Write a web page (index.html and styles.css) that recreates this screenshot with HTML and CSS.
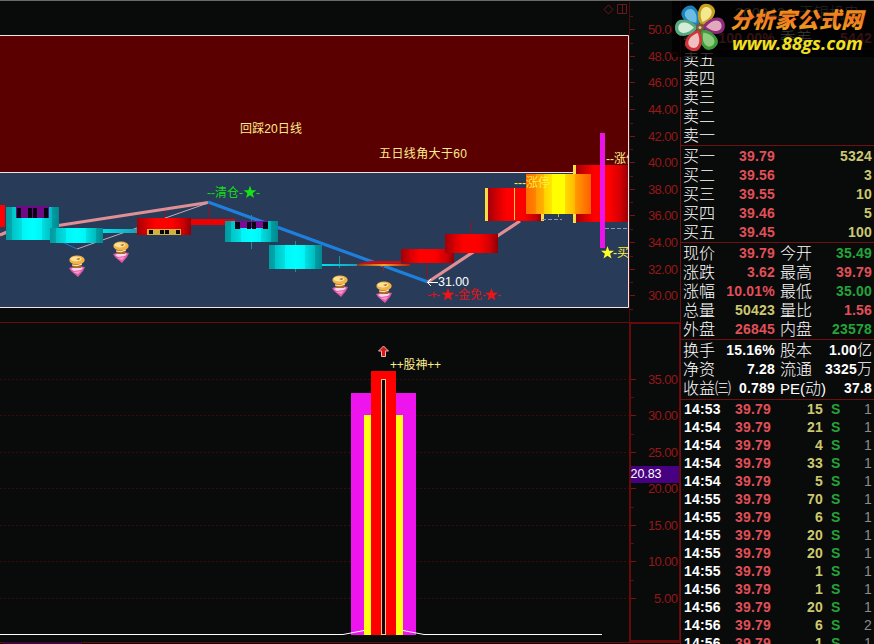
FILE: index.html
```html
<!DOCTYPE html>
<html lang="zh-CN">
<head>
  <meta charset="UTF-8">
  <title>分析家公式网</title>
  <link rel="stylesheet" href="styles.css">
</head>
<body>
<div class="screen">

  <div class="charts">
    <!-- K line -->
    <svg class="chart" width="680" height="322" viewBox="0 0 680 322">
      <defs>
        <linearGradient id="cyan">
          <stop offset="0" stop-color="#009aa0"/><stop offset=".12" stop-color="#00a8ac"/>
          <stop offset=".12" stop-color="#00c4c8"/><stop offset=".3" stop-color="#00dfe2"/>
          <stop offset=".3" stop-color="#00f4f6"/><stop offset=".5" stop-color="#00ffff"/>
          <stop offset=".68" stop-color="#00f4f6"/><stop offset=".68" stop-color="#00dfe2"/>
          <stop offset=".86" stop-color="#00bcc0"/><stop offset=".86" stop-color="#00a0a5"/>
          <stop offset="1" stop-color="#00888f"/>
        </linearGradient>
        <linearGradient id="red">
          <stop offset="0" stop-color="#a00008"/><stop offset=".2" stop-color="#dd0000"/>
          <stop offset=".35" stop-color="#ff0000"/><stop offset=".65" stop-color="#fc0000"/>
          <stop offset=".85" stop-color="#d00004"/><stop offset="1" stop-color="#8c0008"/>
        </linearGradient>
        <linearGradient id="gold">
          <stop offset="0" stop-color="#ff6a00"/><stop offset=".15" stop-color="#ff8400"/>
          <stop offset=".15" stop-color="#ff9c00"/><stop offset=".28" stop-color="#ffb400"/>
          <stop offset=".28" stop-color="#ffd000"/><stop offset=".4" stop-color="#ffe800"/>
          <stop offset=".4" stop-color="#ffff00"/><stop offset=".6" stop-color="#ffff00"/>
          <stop offset=".6" stop-color="#ffdd00"/><stop offset=".75" stop-color="#ffb800"/>
          <stop offset=".75" stop-color="#ff9c00"/><stop offset="1" stop-color="#ff6000"/>
        </linearGradient>
        <linearGradient id="thin">
          <stop offset="0" stop-color="#00e0ee"/><stop offset=".7" stop-color="#18a8bc"/>
          <stop offset="1" stop-color="#5b6b70"/>
        </linearGradient>
        <linearGradient id="amber">
          <stop offset="0" stop-color="#8a3414"/><stop offset=".5" stop-color="#f4a428"/>
          <stop offset="1" stop-color="#c01808"/>
        </linearGradient>
        <clipPath id="plot"><rect x="0" y="0" width="628" height="322"/></clipPath>
        <path id="star" d="M0 -6.500L1.600 -1.800H6.500L2.600 1.200L4 6L0 3.200L-4 6L-2.600 1.200L-6.500 -1.800H-1.600Z"/>
        <g id="ingot">
          <path d="M-8 3Q0 0 8 2L6 6L1 12L-6 6Z" fill="#e259a8"/>
          <path d="M-6 4Q0 0 6 3L4 5L-3 6Z" fill="#fbd3ea"/>
          <path d="M-4 7L4 6L1 9Z" fill="#f79bcf"/>
          <path d="M-5 -1L5 -2L4 3L-4 3Z" fill="#a86b28"/>
          <ellipse cy="-5" rx="7.7" ry="4.5" fill="#f2b344"/>
          <ellipse cx="-1" cy="-6" rx="5.5" ry="2.6" fill="#ffe19a"/>
          <path d="M-1 -6L3 -7L2 -5Z" fill="#8b5a18"/>
          <path d="M-5 0Q0 2 5 -1" stroke="#fff0c8" fill="none"/>
        </g>
      </defs>

      <rect x="0" y="36" width="629" height="136" fill="#5a0000"/>
      <rect x="0" y="173" width="629" height="134" fill="#283b59"/>
      <path d="M0 35.5H628.5V307.5H0M0 172.5H628" stroke="#f2e4e4" fill="none"/>

      <g clip-path="url(#plot)">
        <path d="M76.5 222V228M164.5 208V218M208.5 204V218M427.5 264V279M471.5 221V235" stroke="#8e1420"/>
        <path d="M0 235L7 232M55 226L208 202.500" stroke="#e08f95" stroke-width="3" fill="none"/>
        <path d="M77 249L208 203" stroke="#c9a9b5" fill="none"/>
        <path d="M60 241L77 249" stroke="#1c78d0" fill="none"/>
        <path d="M208 202L428 282" stroke="#1f7fdc" stroke-width="3.200"/>
        <path d="M428 282L520 221" stroke="#e08f95" stroke-width="3.200"/>

        <rect x="0" y="205" width="5" height="22" fill="#f00"/>
        <rect x="6" y="207" width="53" height="33" fill="url(#cyan)"/>
        <rect x="16" y="206" width="33" height="12" fill="#6f0a86"/>
        <path d="M17 208h4v10h-4zM28 208h4v10h-4zM33 208h4v10h-4zM44 208h4v10h-4z" fill="#080412"/>
        <rect x="50" y="228" width="53" height="15" fill="url(#cyan)"/>
        <rect x="103" y="229" width="43" height="4" fill="url(#thin)"/>

        <rect x="181" y="219" width="54" height="6" fill="#ee0000"/>
        <rect x="137" y="218" width="54" height="17" fill="url(#red)"/>
        <rect x="147" y="229" width="34" height="6" fill="#d0b040"/>
        <path d="M149 230h4v4h-4zM160 230h4v4h-4zM165 230h4v4h-4zM176 230h4v4h-4z" fill="#080400"/>

        <path d="M251.500 215V249M295.500 241V272M339.500 256V268" stroke="#14939f"/>
        <rect x="225" y="221" width="53" height="21" fill="url(#cyan)"/>
        <rect x="235" y="221" width="33" height="7" fill="#7c0c98"/>
        <path d="M235 222h5v7h-5zM247 222h4v7h-4zM252 222h4v7h-4zM263 222h5v7h-5z" fill="#080412"/>
        <rect x="269" y="245" width="53" height="24" fill="url(#cyan)"/>
        <rect x="322" y="264" width="44" height="2" fill="url(#thin)"/>
        <path d="M357 264L370 261L401 261V264Z" fill="#c0101c"/>
        <rect x="357" y="264" width="53" height="2" fill="url(#amber)"/>
        <path d="M383.500 266V271" stroke="#9c2020"/>

        <rect x="401" y="249" width="53" height="14" fill="url(#red)"/>
        <rect x="445" y="234" width="53" height="19" fill="url(#red)"/>
        <rect x="488" y="188" width="54" height="33" fill="url(#red)"/>
        <rect x="485" y="188" width="3" height="33" fill="#ffdc46"/>
        <rect x="514" y="188" width="1" height="32" fill="#ffcf40"/>
        <rect x="576" y="165" width="53" height="57" fill="url(#red)"/>
        <rect x="573" y="165" width="3" height="58" fill="#ffdc46"/>
        <rect x="541" y="213" width="3" height="8" fill="#ffdc46"/>
        <rect x="526" y="174" width="65" height="40" fill="url(#gold)"/>
        <path d="M542 219.500H562M605 228.500H629" stroke="#8e98a8" stroke-dasharray="4 2"/>
        <path d="M558.500 214V217" stroke="#c9b430"/>
        <rect x="600" y="133" width="5" height="115" fill="#ea14ea"/>

        <use href="#ingot" x="77" y="265"/>
        <use href="#ingot" x="121" y="251"/>
        <use href="#ingot" x="340" y="285"/>
        <use href="#ingot" x="384" y="291"/>

        <text class="note" x="240" y="132.500" textLength="62">回踩20日线</text>
        <text class="note" x="379" y="157.500" textLength="88">五日线角大于60</text>
        <text class="note bright" x="514" y="186.500">---涨停</text>
        <text class="note" x="606" y="163">--涨停</text>
        <text class="note green" x="207" y="196.500">--清仓-</text>
        <text class="note green" x="256" y="196.500">-</text>
        <text class="note red" x="427" y="298.500" textLength="13">-+-</text>
        <text class="note red" x="454" y="298.500">-金免-</text>
        <text class="note red" x="497" y="298.500">-</text>
        <text class="note bright" x="613" y="256.500">-买</text>
        <text class="note white" x="438" y="286" textLength="31">31.00</text>
        <path d="M427 282.500H438M431 279L427.500 282.500L431 286" stroke="#fff" fill="none"/>
        <use href="#star" x="250" y="192" fill="#14e414"/>
        <use href="#star" x="448" y="294.500" fill="#f01414"/>
        <use href="#star" x="491.500" y="294.500" fill="#f01414"/>
        <use href="#star" x="607.500" y="252.500" fill="#ffff28"/>
      </g>

      <path d="M604 9.500L608.500 5L613 9.500L608.500 14ZM617.500 4.500H626.500V13.500H617.500ZM622.500 4.500V13.500" stroke="#6c1818" fill="none"/>

      <path d="M629.500 2V322" stroke="#4a0c0c"/>
      <path d="M630 29.500h5M630 56.500h5M630 82.500h5M630 109.500h5M630 136.500h5M630 162.500h5M630 189.500h5M630 215.500h5M630 242.500h5M630 269.500h5M630 295.500h5" stroke="#7c1212"/>
      <path d="M630 16.500h3M630 43.500h3M630 69.500h3M630 96.500h3M630 123.500h3M630 149.500h3M630 176.500h3M630 202.500h3M630 229.500h3M630 256.500h3M630 282.500h3M630 309.500h3" stroke="#581010"/>
      <g class="scale">
        <text x="648" y="34" textLength="30">50.00</text>
        <text x="648" y="61" textLength="30">48.00</text>
        <text x="648" y="87" textLength="30">46.00</text>
        <text x="648" y="114" textLength="30">44.00</text>
        <text x="648" y="141" textLength="30">42.00</text>
        <text x="648" y="167" textLength="30">40.00</text>
        <text x="648" y="194" textLength="30">38.00</text>
        <text x="648" y="220" textLength="30">36.00</text>
        <text x="648" y="247" textLength="30">34.00</text>
        <text x="648" y="274" textLength="30">32.00</text>
        <text x="648" y="300" textLength="30">30.00</text>
      </g>
    </svg>

    <!-- indicator -->
    <svg class="chart" width="680" height="322" viewBox="0 322 680 322">
      <path d="M0 322.500H680M0 642.500H680" stroke="#6a0c0c"/>
      <rect x="3" y="642" width="79" height="2" fill="#3c0838"/>
      <path d="M0 379.500H630M0 415.500H630M0 452.500H630M0 488.500H630M0 525.500H630M0 561.500H630M0 598.500H630" stroke="#3a0a0c" stroke-dasharray="2 2"/>

      <rect x="351" y="393" width="65" height="242" fill="#ee14ee"/>
      <rect x="364" y="415" width="39" height="220" fill="#ffff14"/>
      <rect x="371" y="371" width="25" height="264" fill="#ff0000"/>
      <rect x="381.500" y="379.500" width="4" height="255" fill="#140000" stroke="#ffc08c"/>
      <path d="M0 634.500H343L364 630.500M403 630.500L424 634.500H602" stroke="#fff" fill="none"/>
      <path d="M383.500 346L388.500 351H385.500V356.500H381.500V351H378.500Z" fill="#d81818" stroke="#f0b4ac"/>
      <text class="note" x="390" y="368.500" textLength="51">++股神++</text>

      <rect x="630" y="323" width="50" height="318" fill="none" stroke="#680a0a" stroke-width="2"/>
      <path d="M631 379.500h5M631 415.500h5M631 452.500h5M631 488.500h5M631 525.500h5M631 561.500h5M631 598.500h5" stroke="#7c1212"/>
      <path d="M631 397.500h3M631 434.500h3M631 507.500h3M631 543.500h3M631 580.500h3" stroke="#581010"/>
      <g class="scale">
        <text x="648" y="384" textLength="30">35.00</text>
        <text x="648" y="420" textLength="30">30.00</text>
        <text x="648" y="457" textLength="30">25.00</text>
        <text x="648" y="493" textLength="30">20.00</text>
        <text x="648" y="530" textLength="30">15.00</text>
        <text x="648" y="566" textLength="30">10.00</text>
        <text x="654" y="603" textLength="24">5.00</text>
      </g>
      <rect x="631" y="466" width="48" height="17" fill="#480082"/>
      <text class="note white" x="630.500" y="478" textLength="31">20.83</text>
    </svg>
  </div>

  <div class="quote">
    <div class="block head">
      <div class="row title"><span>300342</span><span>天银机电</span></div>
      <div class="row"><span>委比</span><b class="up">100.00%</b><span>委差</span><b class="up">5442</b></div>
    </div>
    <div class="block">
      <div class="row"><span>卖五</span></div>
      <div class="row"><span>卖四</span></div>
      <div class="row"><span>卖三</span></div>
      <div class="row"><span>卖二</span></div>
      <div class="row"><span>卖一</span></div>
    </div>
    <div class="block">
      <div class="row"><span>买一</span><b class="up">39.79</b><span></span><b class="vol">5324</b></div>
      <div class="row"><span>买二</span><b class="up">39.56</b><span></span><b class="vol">3</b></div>
      <div class="row"><span>买三</span><b class="up">39.55</b><span></span><b class="vol">10</b></div>
      <div class="row"><span>买四</span><b class="up">39.46</b><span></span><b class="vol">5</b></div>
      <div class="row"><span>买五</span><b class="up">39.45</b><span></span><b class="vol">100</b></div>
    </div>
    <div class="block">
      <div class="row"><span>现价</span><b class="up">39.79</b><span>今开</span><b class="down">35.49</b></div>
      <div class="row"><span>涨跌</span><b class="up">3.62</b><span>最高</span><b class="up">39.79</b></div>
      <div class="row"><span>涨幅</span><b class="up">10.01%</b><span>最低</span><b class="down">35.00</b></div>
      <div class="row"><span>总量</span><b class="vol">50423</b><span>量比</span><b class="up">1.56</b></div>
      <div class="row"><span>外盘</span><b class="up">26845</b><span>内盘</span><b class="down">23578</b></div>
    </div>
    <div class="block last">
      <div class="row"><span>换手</span><b>15.16%</b><span>股本</span><b>1.00<i>亿</i></b></div>
      <div class="row"><span>净资</span><b>7.28</b><span>流通</span><b>3325<i>万</i></b></div>
      <div class="row"><span>收益㈢</span><b>0.789</b><span><em>PE(</em>动<em>)</em></span><b>37.8</b></div>
    </div>
    <div class="ticks">
      <div class="tick"><b>14:53</b><b class="up">39.79</b><b class="vol">15</b><b class="side">S</b><span>1</span></div>
      <div class="tick"><b>14:54</b><b class="up">39.79</b><b class="vol">21</b><b class="side">S</b><span>1</span></div>
      <div class="tick"><b>14:54</b><b class="up">39.79</b><b class="vol">4</b><b class="side">S</b><span>1</span></div>
      <div class="tick"><b>14:54</b><b class="up">39.79</b><b class="vol">33</b><b class="side">S</b><span>1</span></div>
      <div class="tick"><b>14:54</b><b class="up">39.79</b><b class="vol">5</b><b class="side">S</b><span>1</span></div>
      <div class="tick"><b>14:55</b><b class="up">39.79</b><b class="vol">70</b><b class="side">S</b><span>1</span></div>
      <div class="tick"><b>14:55</b><b class="up">39.79</b><b class="vol">6</b><b class="side">S</b><span>1</span></div>
      <div class="tick"><b>14:55</b><b class="up">39.79</b><b class="vol">20</b><b class="side">S</b><span>1</span></div>
      <div class="tick"><b>14:55</b><b class="up">39.79</b><b class="vol">20</b><b class="side">S</b><span>1</span></div>
      <div class="tick"><b>14:55</b><b class="up">39.79</b><b class="vol">1</b><b class="side">S</b><span>1</span></div>
      <div class="tick"><b>14:56</b><b class="up">39.79</b><b class="vol">1</b><b class="side">S</b><span>1</span></div>
      <div class="tick"><b>14:56</b><b class="up">39.79</b><b class="vol">20</b><b class="side">S</b><span>1</span></div>
      <div class="tick"><b>14:56</b><b class="up">39.79</b><b class="vol">6</b><b class="side">S</b><span>2</span></div>
      <div class="tick"><b>14:56</b><b class="up">39.79</b><b class="vol">1</b><b class="side">S</b><span>1</span></div>
    </div>
  </div>

  <!-- site logo over the corner -->
  <svg class="logo" width="202" height="56" viewBox="672 1 202 56">
    <defs>
      <linearGradient id="fire" x2="0" y2="1">
        <stop offset="0" stop-color="#f0b018"/><stop offset=".5" stop-color="#ee7420"/><stop offset="1" stop-color="#f0b020"/>
      </linearGradient>
      <path id="petal" d="M0 -2C-5 -6 -9 -12 -8 -19C-7 -27 7 -27 8 -19C9 -12 5 -6 0 -2Z"/>
      <path id="inner" d="M0 -6C-4 -10 -6 -14 -5 -18C-4 -23 4 -23 5 -18C6 -14 4 -10 0 -6Z"/>
    </defs>
    <rect x="672" y="1" width="202" height="56" fill="#000" opacity=".78"/>
    <g transform="translate(700 27.500)">
      <g transform="rotate(-37)"><use href="#petal" fill="#1c7fb8"/><use href="#inner" fill="#6cbce4"/></g>
      <g transform="rotate(23)"><use href="#petal" fill="#c8a020"/><use href="#inner" fill="#f4e890"/></g>
      <g transform="rotate(84)"><use href="#petal" fill="#8c2c7c"/><use href="#inner" fill="#e4a8bc"/></g>
      <g transform="rotate(146)"><use href="#petal" fill="#3c9c38"/><use href="#inner" fill="#90cc80"/></g>
      <g transform="rotate(203)"><use href="#petal" fill="#d03438"/><use href="#inner" fill="#f0c0c0"/></g>
      <g transform="rotate(-91)"><use href="#petal" fill="#58a880"/><use href="#inner" fill="#d4ecd8"/></g>
      <circle r="4" fill="#7c5838"/><circle r="1.500" fill="#e8c890"/>
    </g>
    <text class="brand" x="730" y="28" textLength="133" fill="url(#fire)">分析家公式网</text>
    <text class="site" x="732" y="49.500" textLength="131" lengthAdjust="spacingAndGlyphs">www.88gs.com</text>
  </svg>

</div>
</body>
</html>
```
FILE: styles.css
```css
body { margin: 0; background: #090a0a; }
.screen {
  position: relative; display: grid; grid-template-columns: 680px 194px;
  width: 874px; height: 644px; overflow: hidden; box-sizing: border-box;
  background: #090a0a; color: #fff;
  font-family: "Liberation Sans", "Noto Sans CJK SC", sans-serif;
}
.screen::before {
  content: ""; position: absolute; left: 0; top: 0; width: 874px; height: 1px; background: #686868;
}
.charts { display: flex; flex-direction: column; }
.chart { display: block; }

.note { font-size: 12px; fill: #ffec8c; }
.note.bright { fill: #fff03c; }
.note.green { fill: #14dc14; }
.note.red { fill: #e01414; }
.note.white { fill: #fff; font-size: 12.5px; }
.scale { font-size: 13px; fill: #941818; }

/* quote panel */
.quote { border-left: 1px solid #6c1010; padding-top: 1px; overflow: hidden; }
.block { border-bottom: 1px solid #701010; padding-top: 1px; }
.block.last { padding-bottom: 1px; }
.row {
  display: grid; grid-template-columns: 38px 54px 44px 53px;
  height: 19px; padding-left: 2px; line-height: 19px; font-size: 16px; font-weight: 300; white-space: nowrap;
}
.row b { font-size: 14px; letter-spacing: .2px; text-align: right; font-weight: bold; justify-self: end; }
.row i { font-size: 15px; font-style: normal; font-weight: 300; letter-spacing: 0; line-height: 16px; }
.row span + b + span { padding-left: 5px; }
.row em { font-style: normal; font-weight: 400; font-size: 15px; }
.head { height: 46px; border-bottom-color: #380808; }
.head .row { height: 23px; line-height: 21px; }
.head .row + .row { line-height: 27px; }
.head .title { display: flex; gap: 14px; padding-left: 54px; color: #a0a0a0; font-size: 15px; }
.up { color: #e05058; }
.down { color: #24a438; }
.vol { color: #ccc870; }

.tick {
  display: grid; grid-template-columns: 42px 45px 52px 19px 30px;
  height: 18px; padding-left: 3px; line-height: 19px; font-size: 14px; letter-spacing: .2px;
}
.tick .up, .tick .vol, .tick span { text-align: right; }
.tick .side { padding-left: 8px; color: #24a438; }
.tick span { color: #8c8c8c; }

.logo { position: absolute; left: 672px; top: 1px; }
.brand { font-family: "Noto Sans CJK SC", sans-serif; font-size: 22px; font-weight: 900; font-style: italic; }
.site { font-family: "Open Sans", sans-serif; font-size: 18px; font-weight: bold; font-style: italic; fill: #f0e020; }
```
